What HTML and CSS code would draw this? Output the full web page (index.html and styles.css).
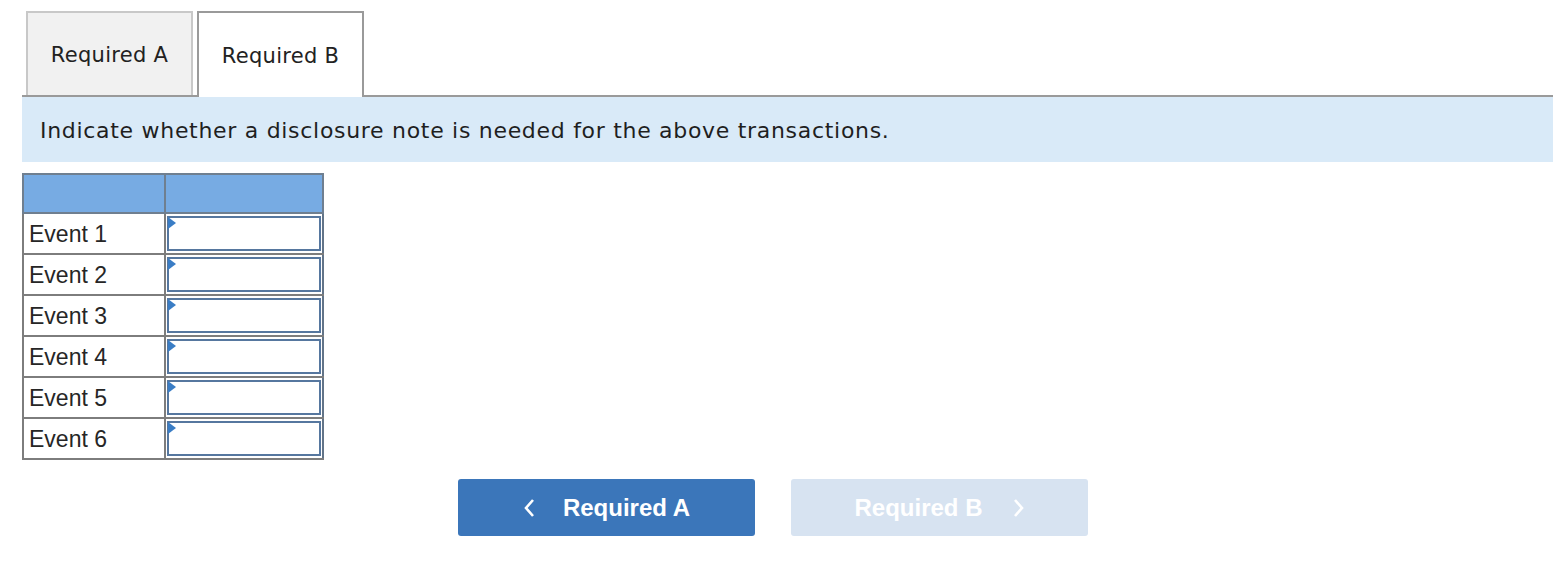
FILE: index.html
```html
<!DOCTYPE html>
<html>
<head>
<meta charset="utf-8">
<link rel="stylesheet" href="styles.css">
</head>
<body>
<div class="page">
  <div class="tabs">
    <div class="tab tab-inactive">Required A</div>
    <div class="tab tab-active">Required B</div>
  </div>
  <div class="instruction">Indicate whether a disclosure note is needed for the above transactions.</div>
  <table class="grid">
    <thead>
      <tr><th class="c1"></th><th class="c2"></th></tr>
    </thead>
    <tbody>
      <tr><td class="label">Event 1</td><td class="entry"><div class="box"><span class="tri"></span></div></td></tr>
      <tr><td class="label">Event 2</td><td class="entry"><div class="box"><span class="tri"></span></div></td></tr>
      <tr><td class="label">Event 3</td><td class="entry"><div class="box"><span class="tri"></span></div></td></tr>
      <tr><td class="label">Event 4</td><td class="entry"><div class="box"><span class="tri"></span></div></td></tr>
      <tr><td class="label">Event 5</td><td class="entry"><div class="box"><span class="tri"></span></div></td></tr>
      <tr><td class="label">Event 6</td><td class="entry"><div class="box"><span class="tri"></span></div></td></tr>
    </tbody>
  </table>
  <div class="nav">
    <button class="btn btn-prev"><svg class="chev chev-l" width="12" height="20" viewBox="0 0 12 20"><polyline points="10,2 3,10 10,18" fill="none" stroke="#ffffff" stroke-width="2.6"/></svg>Required A</button>
    <button class="btn btn-next">Required B<svg class="chev chev-r" width="12" height="20" viewBox="0 0 12 20"><polyline points="2,2 9,10 2,18" fill="none" stroke="#ffffff" stroke-width="2.6"/></svg></button>
  </div>
</div>
</body>
</html>
```
FILE: styles.css
```css
html, body {
  margin: 0;
  padding: 0;
  background: #ffffff;
}
.page {
  padding: 11px 13px 0 22px;
  width: 1531px;
}
.tabs {
  display: flex;
  gap: 4px;
  padding-left: 4px;
  border-bottom: 2px solid #9a9a9a;
  height: 84px;
}
.tab {
  box-sizing: border-box;
  width: 167px;
  font-family: "DejaVu Sans", Verdana, sans-serif;
  font-size: 21px;
  letter-spacing: 0.3px;
  color: #222;
  display: flex;
  align-items: center;
  justify-content: center;
  padding-top: 2px;
}
.tab-inactive {
  height: 84px;
  background: #f1f1f1;
  border: 2px solid #c8c8c8;
  border-bottom: none;
}
.tab-active {
  height: 86px;
  background: #ffffff;
  border: 2px solid #9a9a9a;
  border-bottom: none;
  position: relative;
  z-index: 1;
}
.instruction {
  background: #d9eaf8;
  height: 65px;
  box-sizing: border-box;
  padding: 2px 0 0 18px;
  display: flex;
  align-items: center;
  font-family: "DejaVu Sans", Verdana, sans-serif;
  font-size: 22px;
  letter-spacing: 0.7px;
  color: #1f1f1f;
}
.grid {
  margin-top: 11px;
  border-collapse: collapse;
  font-family: "Liberation Sans", Arial, sans-serif;
}
.grid th {
  background: #77abe3;
  height: 37px;
  padding: 0;
  border: 2px solid #6f7f90;
}
.grid .c1 { width: 140px; }
.grid .c2 { width: 156px; }
.grid td {
  height: 37px;
  padding: 0;
  border: 2px solid #7d7d7d;
}
.grid td.label {
  font-size: 23px;
  color: #262626;
  padding: 1px 0 0 5px;
}
.grid td.entry {
  border-left: 2px solid #627488;
  border-right: 2px solid #627488;
  padding: 1px;
}
.box {
  position: relative;
  box-sizing: border-box;
  height: 35px;
  border: 2px solid #56779f;
  background: #fff;
}
.tri {
  position: absolute;
  left: -1px;
  top: -1px;
  width: 0;
  height: 0;
  border-top: 6px solid transparent;
  border-bottom: 6px solid transparent;
  border-left: 8px solid #3a7dc5;
}
.nav {
  display: flex;
  gap: 36px;
  padding-left: 436px;
  margin-top: 19px;
}
.btn {
  width: 297px;
  height: 57px;
  border: none;
  border-radius: 3px;
  font-family: "Liberation Sans", Arial, sans-serif;
  font-weight: bold;
  font-size: 24px;
  color: #ffffff;
  display: flex;
  align-items: center;
  justify-content: center;
  padding: 0;
}
.btn-prev {
  background: #3b76ba;
}
.btn-next {
  background: #d7e3f1;
}
.chev {
  display: block;
}
.chev-l { margin-right: 28px; }
.chev-r { margin-left: 30px; }
```
